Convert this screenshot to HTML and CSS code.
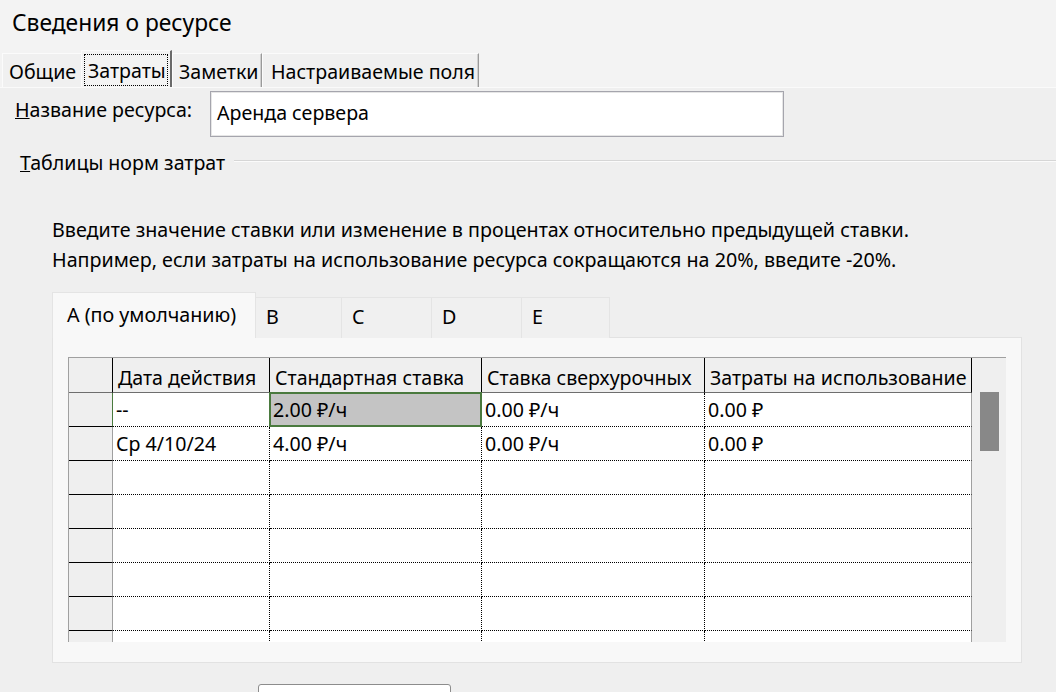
FILE: index.html
```html
<!DOCTYPE html>
<html lang="ru">
<head>
<meta charset="utf-8">
<title>Сведения о ресурсе</title>
<link rel="stylesheet" href="styles.css">
</head>
<body>
<div class="dialog">
  <div class="title">Сведения о ресурсе</div>
  <div class="tabs">
    <div class="tab tab-first">Общие</div>
    <div class="tab tab-active"><span class="focus">Затраты</span></div>
    <div class="tab tab-notes">Заметки</div>
    <div class="tab tab-custom">Настраиваемые поля</div>
  </div>
  <div class="page">
    <div class="name-row">
      <div class="label"><u>Н</u>азвание ресурса:</div>
      <div class="input">Аренда сервера</div>
    </div>
    <div class="group">
      <span class="group-title"><u>Т</u>аблицы норм затрат</span>
      <span class="group-line"></span>
    </div>
    <div class="inner">
      <p class="hint">Введите значение ставки или изменение в процентах относительно предыдущей ставки.<br>Например, если затраты на использование ресурса сокращаются на 20%, введите -20%.</p>
      <div class="rtabs">
        <div class="rtab rtab-active">А (по умолчанию)</div>
        <div class="rtab w86">B</div>
        <div class="rtab w90">C</div>
        <div class="rtab w90">D</div>
        <div class="rtab w88">E</div>
      </div>
      <div class="panel">
        <div class="grid-outer">
          <div class="grid">
            <div class="hc rh-corner"></div>
            <div class="hc">Дата действия</div>
            <div class="hc">Стандартная ставка</div>
            <div class="hc">Ставка сверхурочных</div>
            <div class="hc">Затраты на использование</div>

            <div class="rh cur"></div>
            <div class="c">--</div>
            <div class="c sel">2.00 ₽/ч</div>
            <div class="c">0.00 ₽/ч</div>
            <div class="c last">0.00 ₽</div>

            <div class="rh"></div>
            <div class="c">Ср 4/10/24</div>
            <div class="c">4.00 ₽/ч</div>
            <div class="c">0.00 ₽/ч</div>
            <div class="c last">0.00 ₽</div>

            <div class="rh"></div><div class="c"></div><div class="c"></div><div class="c"></div><div class="c last"></div>
            <div class="rh"></div><div class="c"></div><div class="c"></div><div class="c"></div><div class="c last"></div>
            <div class="rh"></div><div class="c"></div><div class="c"></div><div class="c"></div><div class="c last"></div>
            <div class="rh"></div><div class="c"></div><div class="c"></div><div class="c"></div><div class="c last"></div>
            <div class="rh"></div><div class="c"></div><div class="c"></div><div class="c"></div><div class="c last"></div>
            <div class="rh"></div><div class="c"></div><div class="c"></div><div class="c"></div><div class="c last"></div>
          </div>
          <div class="vscroll"><div class="thumb"></div></div>
        </div>
      </div>
    </div>
    <div class="btn-row"><div class="btn"></div></div>
  </div>
</div>
</body>
</html>
```

FILE: styles.css
```css
* { box-sizing: border-box; }
html, body { margin: 0; padding: 0; }
body {
  width: 1056px;
  height: 692px;
  overflow: hidden;
  background: #efefef;
  font-family: "Noto Sans", "DejaVu Sans", sans-serif;
  color: #000;
}
.dialog { width: 1056px; height: 692px; overflow: hidden; }

.title {
  height: 50px;
  background: #f3f3f3;
  padding: 0 0 6px 12px;
  display: flex;
  align-items: center;
  font-size: 22.8px;
}

.tabs {
  height: 37px;
  display: flex;
  align-items: flex-end;
  padding-left: 2px;
  background: #f3f3f3;
  font-size: 19.6px;
}
.tab {
  height: 34px;
  padding: 1px 0 0 6px;
  display: flex;
  align-items: center;
  background: #f0f0f0;
  border-top: 1px solid #fbfbfb;
  border-left: 1px solid #fbfbfb;
  border-right: 1px solid #9a9a9a;
  box-shadow: inset -1px 0 0 #d0d0d0;
  white-space: nowrap;
}
.tab-first { width: 79px; border-right: none; box-shadow: none; }
.tab-notes { width: 90px; }
.tab-custom { width: 217px; padding-left: 8px; }
.tab-active {
  height: 37px;
  width: 91px;
  padding: 3px 2px 1px 2px;
  background: #f3f3f3;
  border-right: 2px solid #6a6a6a;
  box-shadow: none;
}
.tab-active .focus {
  width: 100%;
  height: 100%;
  display: flex;
  align-items: center;
  padding: 1px 0 0 3px;
  border: 1px dotted #000;
}

.page {
  border-top: 1px solid #fafafa;
  background: #efefef;
}

.name-row {
  display: flex;
  align-items: center;
  margin-top: 3px;
  padding-left: 15px;
  font-size: 19.6px;
}
.label { width: 195px; padding-bottom: 9px; white-space: nowrap; }
.input {
  width: 574px;
  height: 46px;
  background: #fff;
  border: 1px solid #a5a5ad;
  box-shadow: inset 0 0 0 1px #e6e6e6;
  padding: 0 6px 4px;
  display: flex;
  align-items: center;
}

.group {
  display: flex;
  align-items: center;
  margin-top: 12px;
  height: 26px;
  padding-left: 20px;
  font-size: 19.6px;
}
.group-title { white-space: nowrap; padding-right: 9px; }
.group-line {
  flex: 1;
  height: 2px;
  margin-top: -3px;
  border-top: 1px solid #d6d6d6;
  border-bottom: 1px solid #fbfbfb;
}

.inner { padding-left: 52px; }
.hint {
  margin: 40px 0 0;
  font-size: 19.7px;
  line-height: 30px;
  white-space: nowrap;
}

.rtabs {
  margin-top: 17px;
  display: flex;
  align-items: flex-end;
  height: 46px;
  font-size: 19.7px;
  position: relative;
  z-index: 1;
}
.rtab {
  height: 41px;
  padding: 0 0 3px 10px;
  display: flex;
  align-items: center;
  background: #f0f0f0;
  border: 1px solid #e4e4e4;
  border-bottom: none;
  border-left: none;
}
.rtab-active {
  width: 204px;
  height: 46px;
  padding: 0 0 2px 14px;
  background: #f8f8f8;
  border-left: 1px solid #e4e4e4;
  border-right: 1px solid #e4e4e4;
  white-space: nowrap;
}
.w86 { width: 86px; }
.w90 { width: 90px; }
.w88 { width: 88px; }

.panel {
  width: 970px;
  height: 326px;
  margin-top: -1px;
  background: #f8f8f8;
  border: 1px solid #e2e2e2;
  padding: 19px 0 0 15px;
}

.grid-outer {
  width: 938px;
  height: 285px;
  display: flex;
  border-top: 1px solid #a0a0a0;
  border-left: 1px solid #a0a0a0;
  overflow: hidden;
}
.grid {
  width: 904px;
  display: grid;
  grid-template-columns: 44px 157px 212px 223px 267px;
  grid-template-rows: 35px;
  grid-auto-rows: 34px;
  font-size: 19.6px;
  align-content: start;
}
.hc {
  background: #efefef;
  border-right: 1px solid #000;
  border-bottom: 1px solid #6e6e6e;
  display: flex;
  align-items: flex-end;
  padding: 0 0 1px 5px;
  white-space: nowrap;
  overflow: hidden;
}
.rh-corner { border-right: 1px solid #000; }
.rh {
  background: #efefef;
  border-right: 1px solid #a0a0a0;
  border-bottom: 1px solid #000;
}
.rh.cur { border-right: 1px solid #4a7a3e; }
.c {
  background: #fff;
  border-right: 1px dotted #000;
  border-bottom: 1px dotted #000;
  display: flex;
  align-items: center;
  padding: 0 0 1px 3px;
  white-space: nowrap;
}
.c.last { border-right: 1px solid #a0a0a0; }
.sel {
  position: relative;
  background: #c4c4c4;
}
.sel::after {
  content: "";
  position: absolute;
  left: -1px;
  top: -1px;
  right: -1px;
  bottom: -1px;
  border: 2px solid #4a7a3e;
}

.vscroll {
  width: 34px;
  background: #efefef;
  padding: 34px 0 0 8px;
}
.thumb {
  width: 19px;
  height: 59px;
  background: #888888;
}

.btn-row { padding-left: 258px; margin-top: 21px; }
.btn {
  width: 193px;
  height: 34px;
  background: #fff;
  border: 1px solid #8c8c8c;
  border-radius: 3px;
}
```
